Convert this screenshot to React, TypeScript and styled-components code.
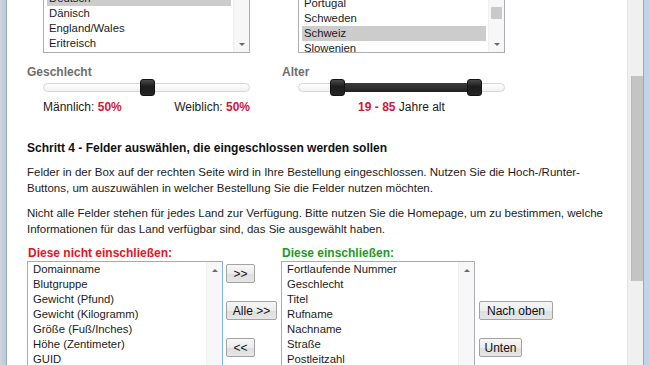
import React from 'react';
import styled, { createGlobalStyle } from 'styled-components';

const GlobalStyle = createGlobalStyle`
  html, body {
    margin: 0;
    padding: 0;
    background: #ffffff;
    overflow: hidden;
  }
  body {
    font-family: "Liberation Sans", Arial, sans-serif;
    font-size: 12px;
    color: #1b1b1b;
  }
`;

const Window = styled.div`
  display: flex;
  width: 649px;
  height: 365px;
  overflow: hidden;
`;

const FrameLeft = styled.div`
  flex: none;
  width: 6px;
  background: linear-gradient(90deg, #cdd5de, #bccada);
  border-right: 1px solid #95a8bd;
`;

const FrameRight = styled.div`
  flex: none;
  width: 5px;
  background: #c0d4ea;
  border-left: 1px solid #9ca8b6;
`;

const PageScroll = styled.div`
  flex: none;
  width: 15px;
  background: #f0f0f0;
  border-left: 1px solid #e3e3e3;
  padding-top: 76px;
  display: flex;
  flex-direction: column;
  align-items: flex-end;
`;

const PageThumb = styled.div`
  width: 11px;
  height: 205px;
  background: #c4c4c4;
  border-left: 1px solid #b8b8b8;
`;

const Content = styled.div`
  flex: 1;
  overflow: hidden;
  padding-left: 20px;
`;

const Page = styled.div`
  margin-top: -40px;
  display: flex;
  flex-direction: column;
`;

const Columns = styled.div`
  display: flex;
  gap: 32px;
`;

const Column = styled.div`
  width: 223px;
  display: flex;
  flex-direction: column;
`;

const Indent = styled.div`
  margin-left: 16px;
`;

const ListBox = styled.div<{ $w: number; $h: number; $focus?: boolean }>`
  box-sizing: border-box;
  display: flex;
  width: ${(p) => p.$w}px;
  height: ${(p) => p.$h}px;
  border: 1px solid ${(p) => (p.$focus ? '#7eb4ea' : '#abadb3')};
  background: #ffffff;
  overflow: hidden;
`;

const Items = styled.div<{ $scroll: number }>`
  flex: 1;
  min-width: 0;
  padding: 0 2px 0 3px;
  margin-top: ${(p) => -p.$scroll}px;
`;

const Item = styled.div<{ $sel?: boolean }>`
  height: 15px;
  line-height: 15px;
  padding-left: 2px;
  font-size: 11.3px;
  white-space: nowrap;
  background: ${(p) => (p.$sel ? '#cccccc' : 'transparent')};
`;

const ScrollCol = styled.div`
  flex: none;
  width: 15px;
  display: flex;
  flex-direction: column;
  background: #f7f7f7;
  border-left: 1px solid #f0f0f0;
`;

const ArrowBox = styled.div`
  flex: none;
  height: 16px;
  display: flex;
  align-items: center;
  justify-content: center;
`;

const Arrow = styled.div<{ $up?: boolean }>`
  width: 0;
  height: 0;
  border-left: 3px solid transparent;
  border-right: 3px solid transparent;
  ${(p) => (p.$up ? 'border-bottom: 3px solid #6a6a6a;' : 'border-top: 3px solid #6a6a6a;')}
`;

const Track = styled.div`
  flex: 1;
  display: flex;
  flex-direction: column;
  align-items: center;
`;

const Thumb = styled.div<{ $at: number; $size: number }>`
  width: 11px;
  height: ${(p) => p.$size}px;
  margin-top: ${(p) => p.$at}px;
  background: #c9c9c9;
  border-radius: 1px;
`;

const FieldLabel = styled.div`
  margin-top: 12px;
  line-height: 14px;
  font-weight: bold;
  color: #6e6e6e;
`;

const SliderBox = styled.div`
  position: relative;
  height: 17px;
  margin-left: 16px;
  display: flex;
  align-items: center;
`;

const SliderTrack = styled.div`
  box-sizing: border-box;
  flex: 1;
  height: 9px;
  border: 1px solid #d6d6d6;
  border-radius: 5px;
  background: linear-gradient(#ffffff, #f1f1f1);
`;

const SliderRange = styled.div`
  position: absolute;
  top: 4px;
  height: 9px;
  background: linear-gradient(#3c3c3c, #222222);
`;

const SliderHandle = styled.div`
  box-sizing: border-box;
  position: absolute;
  top: 0;
  width: 15px;
  height: 17px;
  margin-left: -7px;
  border-radius: 3px;
  border: 1px solid #141414;
  background: linear-gradient(#4a4a4a, #1c1c1c 45%, #262626);
`;

const ValueRow = styled.div<{ $center?: boolean }>`
  margin: 4px 0 0 16px;
  line-height: 14px;
  display: flex;
  justify-content: ${(p) => (p.$center ? 'center' : 'space-between')};
`;

const Hot = styled.b`
  color: #d3173c;
`;

const Heading = styled.div`
  margin-top: 26px;
  line-height: 16px;
  font-weight: bold;
  color: #111111;
`;

const Para = styled.p<{ $top: number }>`
  margin: ${(p) => p.$top}px 0 0;
  line-height: 16px;
  font-size: 11.5px;
  white-space: nowrap;
`;

const PickRow = styled.div`
  margin-top: 8px;
  display: flex;
  gap: 4px;
`;

const PickCol = styled.div`
  display: flex;
  flex-direction: column;
`;

const PickTitle = styled.div<{ $color: string }>`
  line-height: 16px;
  padding-left: 1px;
  font-weight: bold;
  color: ${(p) => p.$color};
`;

const ButtonCol = styled.div<{ $top: number }>`
  display: flex;
  flex-direction: column;
  align-items: flex-start;
  gap: 18px;
  padding-top: ${(p) => p.$top}px;
`;

const ButtonStack = styled(ButtonCol)`
  margin-left: -1px;
`;

const Button = styled.button<{ $w: number }>`
  box-sizing: border-box;
  width: ${(p) => p.$w}px;
  height: 19px;
  padding: 0;
  font-family: "Liberation Sans", Arial, sans-serif;
  font-size: 12px;
  color: #111111;
  border: 1px solid #a3a3a3;
  border-radius: 2px;
  background: linear-gradient(#f6f6f6, #ececec 50%, #dedede 51%, #e6e6e6);
`;

const countries = ['Bulgarisch', 'Chinesisch', 'Deutsch', 'Dänisch', 'England/Wales', 'Eritreisch'];
const regions = ['Niederlande', 'Norwegen', 'Polen', 'Portugal', 'Schweden', 'Schweiz', 'Slowenien'];
const excluded = [
  'Domainname',
  'Blutgruppe',
  'Gewicht (Pfund)',
  'Gewicht (Kilogramm)',
  'Größe (Fuß/Inches)',
  'Höhe (Zentimeter)',
  'GUID',
  'Haarfarbe',
];
const included = [
  'Fortlaufende Nummer',
  'Geschlecht',
  'Titel',
  'Rufname',
  'Nachname',
  'Straße',
  'Postleitzahl',
  'Stadt',
];

type ListProps = {
  items: string[];
  selected?: string;
  w: number;
  h: number;
  scroll?: number;
  thumbAt: number;
  focus?: boolean;
  bottomArrow?: boolean;
};

const List = ({ items, selected, w, h, scroll = 0, thumbAt, focus, bottomArrow = true }: ListProps) => (
  <ListBox $w={w} $h={h} $focus={focus}>
    <Items $scroll={scroll}>
      {items.map((it) => (
        <Item key={it} $sel={it === selected}>
          {it}
        </Item>
      ))}
    </Items>
    <ScrollCol>
      <ArrowBox>
        <Arrow $up />
      </ArrowBox>
      <Track>
        <Thumb $at={thumbAt} $size={12} />
      </Track>
      {bottomArrow && (
        <ArrowBox>
          <Arrow />
        </ArrowBox>
      )}
    </ScrollCol>
  </ListBox>
);

const pct = (v: number) => `${v}%`;

const App = () => {
  const gender = 50;
  const ageFrom = 19;
  const ageTo = 85;

  return (
    <>
      <GlobalStyle />
      <Window>
        <FrameLeft />
        <Content>
          <Page>
            <Columns>
              <Column>
                <Indent>
                  <List items={countries} selected="Deutsch" w={207} h={93} thumbAt={4} />
                </Indent>
                <FieldLabel>Geschlecht</FieldLabel>
                <SliderBox>
                  <SliderTrack />
                  <SliderHandle style={{ left: pct(gender) }} />
                </SliderBox>
                <ValueRow>
                  <span>
                    Männlich: <Hot>{gender}%</Hot>
                  </span>
                  <span>
                    Weiblich: <Hot>{100 - gender}%</Hot>
                  </span>
                </ValueRow>
              </Column>
              <Column>
                <Indent>
                  <List items={regions} selected="Schweiz" w={207} h={93} scroll={10} thumbAt={30} />
                </Indent>
                <FieldLabel>Alter</FieldLabel>
                <SliderBox>
                  <SliderTrack />
                  <SliderRange style={{ left: pct(ageFrom), width: pct(ageTo - ageFrom) }} />
                  <SliderHandle style={{ left: pct(ageFrom) }} />
                  <SliderHandle style={{ left: pct(ageTo) }} />
                </SliderBox>
                <ValueRow $center>
                  <span>
                    <Hot>
                      {ageFrom} - {ageTo}
                    </Hot>{' '}
                    Jahre alt
                  </span>
                </ValueRow>
              </Column>
            </Columns>

            <Heading>Schritt 4 - Felder auswählen, die eingeschlossen werden sollen</Heading>
            <Para $top={8}>
              Felder in der Box auf der rechten Seite wird in Ihre Bestellung eingeschlossen. Nutzen Sie die Hoch-/Runter-
              <br />
              Buttons, um auszuwählen in welcher Bestellung Sie die Felder nutzen möchten.
            </Para>
            <Para $top={9}>
              Nicht alle Felder stehen für jedes Land zur Verfügung. Bitte nutzen Sie die Homepage, um zu bestimmen, welche
              <br />
              Informationen für das Land verfügbar sind, das Sie ausgewählt haben.
            </Para>

            <PickRow>
              <PickCol>
                <PickTitle $color="#e3141e">Diese nicht einschließen:</PickTitle>
                <List items={excluded} w={196} h={130} thumbAt={140} focus bottomArrow={false} />
              </PickCol>
              <ButtonStack $top={19}>
                <Button $w={29}>&gt;&gt;</Button>
                <Button $w={51}>Alle &gt;&gt;</Button>
                <Button $w={29}>&lt;&lt;</Button>
              </ButtonStack>
              <PickCol>
                <PickTitle $color="#1f9a1f">Diese einschließen:</PickTitle>
                <List items={included} w={194} h={130} thumbAt={140} bottomArrow={false} />
              </PickCol>
              <ButtonCol $top={56}>
                <Button $w={74}>Nach oben</Button>
                <Button $w={43}>Unten</Button>
              </ButtonCol>
            </PickRow>
          </Page>
        </Content>
        <PageScroll>
          <PageThumb />
        </PageScroll>
        <FrameRight />
      </Window>
    </>
  );
};

export default App;
